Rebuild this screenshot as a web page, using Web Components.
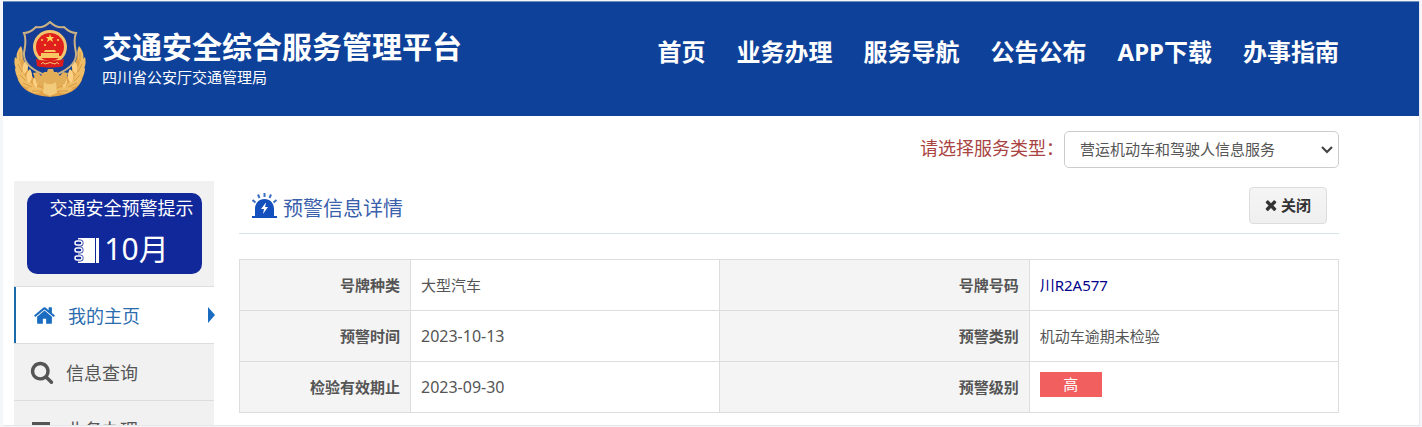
<!DOCTYPE html>
<html lang="zh-CN">
<head>
<meta charset="utf-8">
<meta name="viewport" content="width=device-width, initial-scale=1">
<title>交通安全综合服务管理平台</title>
<style>
  * { box-sizing: border-box; }
  body {
    margin: 0;
    height: 100vh;
    padding: 1px 2px 1px 3px;
    background: #f5f6f9;
    color: #555;
    font: 15px/20px "Noto Sans", "Noto Sans CJK SC", sans-serif;
  }
</style>
</head>
<body>

<page-frame>
  <site-header slot="header" heading="交通安全综合服务管理平台" sub="四川省公安厅交通管理局">
    <a href="#home">首页</a>
    <a href="#business">业务办理</a>
    <a href="#guide">服务导航</a>
    <a href="#notice">公告公布</a>
    <a href="#app">APP下载</a>
    <a href="#help">办事指南</a>
  </site-header>

  <service-picker slot="toolbar"></service-picker>

  <side-menu slot="side">
    <month-card slot="top" month="10">交通安全预警提示</month-card>
    <menu-item icon="home" active>我的主页</menu-item>
    <menu-item icon="search">信息查询</menu-item>
    <menu-item icon="list">业务办理</menu-item>
  </side-menu>

  <detail-panel heading="预警信息详情">
    <warning-table></warning-table>
  </detail-panel>
</page-frame>

<script>
// 图标
const ICONS = {
  home: '<svg width="23" height="23" viewBox="0 0 1792 1792" aria-hidden="true"><path fill="currentColor" d="M1472 992v480q0 26-19 45t-45 19h-384v-384h-256v384h-384q-26 0-45-19t-19-45v-480q0-1 .5-3t.5-3l575-474 575 474q1 2 1 6zm223-69l-62 74q-8 9-21 11h-3q-13 0-21-7l-692-577-692 577q-12 8-24 7-13-2-21-11l-62-74q-8-10-7-23.5t11-21.5l719-599q32-26 76-26t76 26l244 204v-195q0-14 9-23t23-9h192q14 0 23 9t9 23v408l219 182q10 8 11 21.5t-7 23.5z"/></svg>',
  search: '<svg width="24" height="24" viewBox="0 0 1792 1792" aria-hidden="true"><path fill="currentColor" d="M1216 832q0-185-131.5-316.5t-316.5-131.5-316.5 131.5-131.5 316.5 131.5 316.5 316.5 131.5 316.5-131.5 131.5-316.5zm512 832q0 52-38 90t-90 38q-54 0-90-38l-343-342q-179 124-399 124-143 0-273.5-55.5t-225-150-150-225-55.5-273.5 55.5-273.5 150-225 225-150 273.5-55.5 273.5 55.5 225 150 150 225 55.5 273.5q0 220-124 399l343 343q37 37 37 90z"/></svg>',
  list: '<svg width="22" height="18" viewBox="0 0 22 18" aria-hidden="true"><path fill="currentColor" d="M1 2h18v3H1zM1 8h18v3H1zM1 14h18v3H1z"/></svg>',
  times: '<svg width="16" height="16" viewBox="0 0 1792 1792" aria-hidden="true"><path fill="currentColor" d="M1490 1322q0 40-28 68l-136 136q-28 28-68 28t-68-28l-294-294-294 294q-28 28-68 28t-68-28l-136-136q-28-28-28-68t28-68l294-294-294-294q-28-28-28-68t28-68l136-136q28-28 68-28t68 28l294 294 294-294q28-28 68-28t68 28l136 136q28 28 28 68t-28 68l-294 294 294 294q28 28 28 68z"/></svg>',
  chevron: '<svg width="12" height="8" viewBox="0 0 12 8" aria-hidden="true"><path fill="none" stroke="#444" stroke-width="2.200" d="M1 1l5 5 5-5"/></svg>',
  alarm: `<svg width="26" height="26" viewBox="0 0 26 26" aria-hidden="true">
    <path fill="#1450bd" d="M0 25v-2h3v-7C3 10 7 6 12.500 6S22 10 22 16v7h3v2z"/>
    <path fill="#fff" d="M13.500 10l-4.500 6h3l-1 5 5-7h-3l1-4z"/>
    <path stroke="#3b70c4" stroke-width="2" d="M12.500 0v4M6 1.500L7.500 5M19 1.500L17.500 5M.5 7l3 2.500M24.500 7l-3 2.500"/></svg>`,
  notebook: `<svg width="26" height="26" viewBox="0 0 26 26" aria-hidden="true">
    <path fill="#fff" d="M4 0h17v25H4zM22 0h3v25h-3z"/>
    <g fill="#fff" stroke="#10289a" stroke-width="5">
      <rect x="2" y="4" width="5" height="2" rx="1"/>
      <rect x="2" y="11" width="5" height="2" rx="1"/>
      <rect x="2" y="19" width="5" height="2" rx="1"/>
    </g>
    <g fill="#10289a" stroke="#fff" stroke-width="1.500">
      <rect x="1" y="3" width="7" height="4" rx="2"/>
      <rect x="1" y="10" width="7" height="4" rx="2"/>
      <rect x="1" y="18" width="7" height="4" rx="2"/>
    </g></svg>`,
}

// 警徽：橄榄枝的叶片左右对称，右半边由左半边镜像得到
const LEAVES = `
  <path fill="#e0a34c" d="M7 30C-1 42 0 60 12 69c7 5 16 6 24 7v-9C22 64 12 50 7 30z"/>
  <path fill="#f0bd67" d="M7 25c-5 6-6 12-2 18 4-5 5-12 2-18zM1 36c-2 8 1 14 7 17 1-7-2-13-7-17zM1 47c0 8 5 13 12 14-1-7-5-12-12-14zM4 58c3 7 9 10 16 8-3-6-9-9-16-8zM13 68c5 5 11 6 17 1-5-4-12-4-17-1z"/>
  <path fill="#fbd083" d="M13 38c-4 4-6 9-3 15 5-4 5-10 3-15zM16 48c-4 4-5 9-1 14 4-4 4-9 1-14zM21 56c-3 3-3 7 1 11 3-4 2-8-1-11z"/>
  <path fill="none" stroke="#c98a3a" stroke-width=".7" d="M6 31v9M4 43l4 8M6 54l6 6M9 62l9 4M18 70l10 0"/>`

const EMBLEM = `<svg width="72" height="76" viewBox="0 0 72 76" role="img" aria-label="警徽">
  ${LEAVES}
  <g transform="matrix(-1 0 0 1 72 0)">${LEAVES}</g>
  <path fill="#173c93" stroke="#c9b184" stroke-width="2" d="M36 1c-4 4-9 6-14 5-4 4-8 6-12 6 3 7 1 13 0 20-1 12 11 19 26 24 15-5 27-12 26-24-1-7-3-13 0-20-4 0-8-2-12-6-5 1-10-1-14-5z"/>
  <path fill="#e3ae58" d="M19 52l5-1 3 4 3-4h3l1-3h5l1 3h3l3 4 3-4 5 1-3 11-14 6-14-6z"/>
  <path fill="#f2ca7b" d="M30 61c4 3 8 3 12 0l1 11-7 3-7-3z"/>
  <circle cx="36" cy="26" r="17" fill="#f3c46f"/>
  <circle cx="36" cy="26" r="14" fill="#e0201c"/>
  <path fill="#ffd65a" d="M36 13l1 3h3l-2 2 1 3-3-2-3 2 1-3-2-2h3z"/>
  <g fill="#ffd65a"><circle cx="28" cy="19" r="1"/><circle cx="44" cy="19" r="1"/><circle cx="31" cy="24" r="1"/><circle cx="41" cy="24" r="1"/></g>
  <path fill="#f8c761" d="M31 29h10l1 2H30zM27 32h18v3H27zM24 35h24v2H24z"/>
  <path fill="#d91d1c" d="M22 38c4 2 24 2 28 0l-1 7c-4 2-22 2-26 0z"/>
  <path fill="none" stroke="#f3c46f" stroke-width="1" d="M27 43q2-3 4 0 5-3 10 0 2-3 4 0"/>
</svg>`

class PageFrame extends HTMLElement {
  constructor() {
    super()
    this.attachShadow({ mode: 'open' }).innerHTML = `
      <style>
        :host {
          display: block;
          height: 100%;
          overflow: hidden;
          background: #fff;
          border-right: 1px solid #e6e9ee;
          border-bottom: 1px solid #e6e6e6;
        }
        .toolbar { padding: 15px 80px 13px 11px; }
        .columns { display: flex; align-items: flex-start; gap: 25px; padding: 0 80px 0 11px; }
        aside { flex: 0 0 200px; }
        main { flex: 1; min-width: 0; }
      </style>
      <slot name="header"></slot>
      <div class="toolbar"><slot name="toolbar"></slot></div>
      <div class="columns">
        <aside><slot name="side"></slot></aside>
        <main><slot></slot></main>
      </div>`
  }
}

class SiteHeader extends HTMLElement {
  constructor() {
    super()
    this.attachShadow({ mode: 'open' }).innerHTML = `
      <style>
        :host { display: block; border-top: 1px solid #6f8fbd; background: #0e4199; color: #fff; }
        header {
          display: flex;
          align-items: center;
          min-height: 114px;
          padding: 0 80px 0 11px;
        }
        svg { flex: none; margin-right: 16px; }
        .brand { flex: 1; padding-bottom: 2px; }
        h1 { margin: 0; font-size: 30px; line-height: 38px; font-weight: 700; white-space: nowrap; }
        p { margin: 0; line-height: 22px; }
        nav { display: flex; gap: 31px; padding-bottom: 14px; }
        ::slotted(a) {
          color: inherit;
          font-size: 24px;
          line-height: 36px;
          font-weight: 700;
          text-decoration: none;
          white-space: nowrap;
        }
      </style>
      <header>
        ${EMBLEM}
        <div class="brand">
          <h1>${this.getAttribute('heading')}</h1>
          <p>${this.getAttribute('sub')}</p>
        </div>
        <nav><slot></slot></nav>
      </header>`
  }
}

class ServicePicker extends HTMLElement {
  constructor() {
    super()
    this.attachShadow({ mode: 'open' }).innerHTML = `
      <style>
        :host { display: flex; justify-content: flex-end; align-items: center; }
        label { color: #a94442; font-size: 18px; line-height: 32px; padding-bottom: 4px; }
        .field { display: grid; align-items: center; }
        .field > * { grid-area: 1 / 1; }
        svg { justify-self: end; margin-right: 6px; pointer-events: none; }
        select {
          appearance: none;
          width: 275px;
          height: 37px;
          padding: 0 24px 2px 15px;
          border: 1px solid #ccc;
          border-radius: 5px;
          background: #fff;
          color: #555;
          font: inherit;
        }
      </style>
      <label for="type">请选择服务类型：</label>
      <div class="field">
        <select id="type">
          <option>营运机动车和驾驶人信息服务</option>
        </select>
        ${ICONS.chevron}
      </div>`
  }
}

class SideMenu extends HTMLElement {
  constructor() {
    super()
    this.attachShadow({ mode: 'open' }).innerHTML = `
      <style>
        :host { display: block; background: #f1f1f1; }
        .top { padding: 12px 12px 12px 13px; }
        nav { border-top: 1px solid #ddd; }
      </style>
      <div class="top"><slot name="top"></slot></div>
      <nav><slot></slot></nav>`
  }
}

class MonthCard extends HTMLElement {
  constructor() {
    super()
    this.attachShadow({ mode: 'open' }).innerHTML = `
      <style>
        :host {
          display: block;
          padding-left: 14px;
          border-radius: 10px;
          background: #10289a;
          color: #fff;
          text-align: center;
          white-space: nowrap;
        }
        .title { font-size: 18px; line-height: 30px; }
        .month {
          display: flex;
          justify-content: center;
          align-items: center;
          gap: 4px;
          font-size: 30px;
          line-height: 51px;
        }
        svg { margin-top: 4px; }
      </style>
      <div class="title"><slot></slot></div>
      <div class="month">${ICONS.notebook}<span>${this.getAttribute('month')}月</span></div>`
  }
}

class MenuItem extends HTMLElement {
  constructor() {
    super()
    this.attachShadow({ mode: 'open' }).innerHTML = `
      <style>
        :host { display: block; position: relative; border-bottom: 1px solid #ddd; }
        a {
          box-sizing: border-box;
          display: flex;
          align-items: center;
          gap: 10px;
          height: 56px;
          padding: 2px 0 0 14px;
          color: #555;
          font-size: 18px;
          text-decoration: none;
        }
        .icon { display: flex; justify-content: center; width: 28px; padding-bottom: 2px; }
        :host([active]) a { background: #fff; border-left: 2px solid #1b6aaa; color: #2b6cae; }
        :host([active]) .icon { color: #1a6cc0; }
        :host([active])::after {
          content: "";
          position: absolute;
          top: 20px;
          right: -1px;
          border: 8px solid transparent;
          border-left: 7px solid #1a6cc0;
          border-right: 0;
        }
      </style>
      <a href="#${this.getAttribute('icon')}">
        <span class="icon">${ICONS[this.getAttribute('icon')]}</span>
        <slot></slot>
      </a>`
  }
}

class DetailPanel extends HTMLElement {
  constructor() {
    super()
    this.attachShadow({ mode: 'open' }).innerHTML = `
      <style>
        :host { display: block; }
        .head {
          display: flex;
          align-items: center;
          padding: 6px 12px 9px 13px;
          border-bottom: 1px solid #d5e3ea;
          margin-bottom: 25px;
        }
        h2 {
          display: flex;
          align-items: center;
          gap: 5px;
          flex: 1;
          margin: 0;
          color: #3a5fab;
          font-size: 20px;
          line-height: 30px;
          font-weight: 400;
        }
        h2 span { padding-top: 6px; }
        button {
          display: flex;
          justify-content: center;
          align-items: center;
          width: 78px;
          height: 37px;
          padding: 0 2px 2px 0;
          gap: 2px;
          border: 1px solid #ddd;
          border-radius: 4px;
          background: linear-gradient(#f5f5f5, #efefef);
          color: #333;
          font: inherit;
          font-weight: 700;
        }
      </style>
      <div class="head">
        <h2>${ICONS.alarm}<span>${this.getAttribute('heading')}</span></h2>
        <button type="button">${ICONS.times}<span>关闭</span></button>
      </div>
      <slot></slot>`
  }
}

const ROWS = [
  ['号牌种类', '大型汽车', '号牌号码', '<a href="#plate">川R2A577</a>'],
  ['预警时间', '<time>2023-10-13</time>', '预警类别', '机动车逾期未检验'],
  ['检验有效期止', '<time>2023-09-30</time>', '预警级别', '<level-badge>高</level-badge>'],
]

class WarningTable extends HTMLElement {
  constructor() {
    super()
    const rows = ROWS.map(([k1, v1, k2, v2]) =>
      `<tr><th scope="row">${k1}</th><td>${v1}</td><th scope="row">${k2}</th><td>${v2}</td></tr>`
    ).join('')

    this.attachShadow({ mode: 'open' }).innerHTML = `
      <style>
        :host { display: block; }
        table { width: 100%; border-collapse: collapse; table-layout: fixed; }
        th, td {
          padding: 10px;
          border: 1px solid #ddd;
          line-height: 30px;
          vertical-align: top;
        }
        th { background: #f4f4f4; text-align: right; font-weight: 700; }
        td { background: #fff; text-align: left; }
        time { font-size: 16px; }
        a { color: #00008b; text-decoration: none; }
        .key { width: 171px; }
      </style>
      <table>
        <colgroup><col class="key"><col><col><col></colgroup>
        <tbody>${rows}</tbody>
      </table>`
  }
}

class LevelBadge extends HTMLElement {
  constructor() {
    super()
    this.attachShadow({ mode: 'open' }).innerHTML = `
      <style>
        :host {
          display: block;
          width: 62px;
          background: #f15f5f;
          color: #fff;
          line-height: 25px;
          text-align: center;
        }
      </style>
      <slot></slot>`
  }
}

customElements.define('page-frame', PageFrame)
customElements.define('site-header', SiteHeader)
customElements.define('service-picker', ServicePicker)
customElements.define('side-menu', SideMenu)
customElements.define('month-card', MonthCard)
customElements.define('menu-item', MenuItem)
customElements.define('detail-panel', DetailPanel)
customElements.define('level-badge', LevelBadge)
customElements.define('warning-table', WarningTable)
</script>
</body>
</html>
